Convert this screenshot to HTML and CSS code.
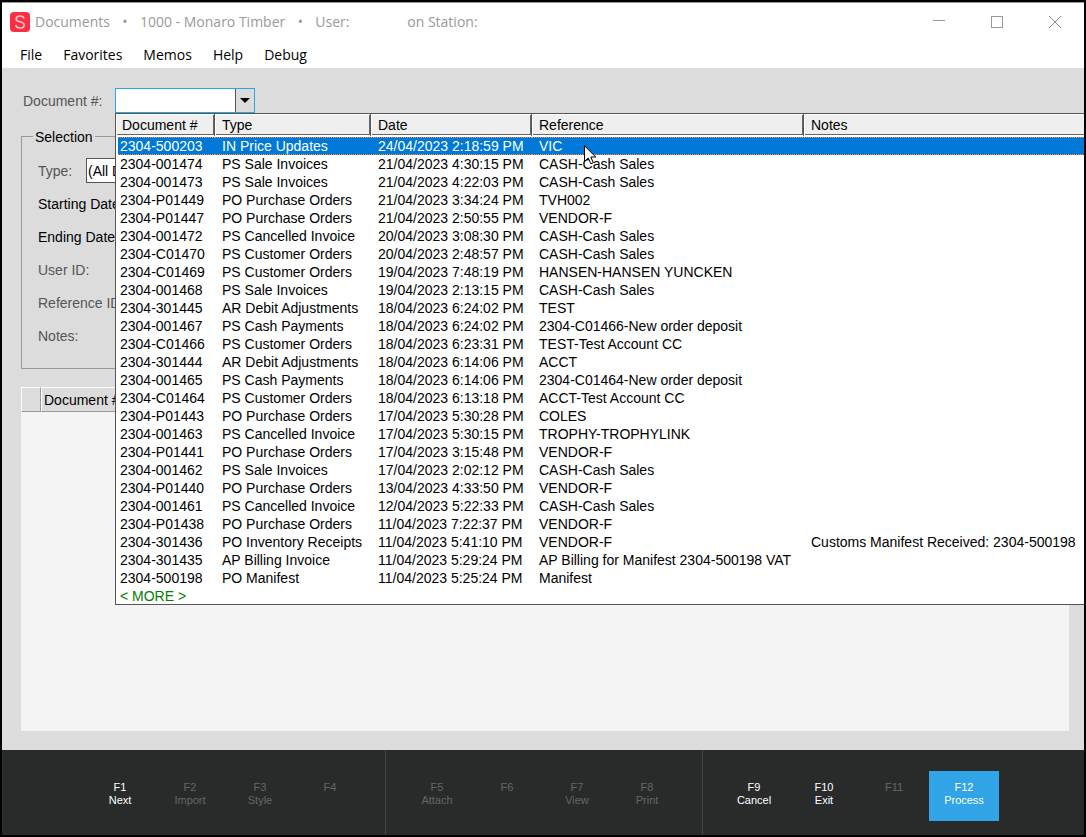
FILE: index.html
```html
<!DOCTYPE html>
<html lang="en">
<head>
    <meta charset="UTF-8">
    <meta name="viewport" content="width=device-width, initial-scale=1.0">
    <title>Documents</title>
    <link rel="stylesheet" href="styles.css">
</head>
<body>
    <div class="window">
        <header class="titlebar">
            <svg class="logo" width="20" height="20" viewBox="0 0 20 20" aria-hidden="true">
                <rect width="20" height="20" rx="4" fill="#fb2f41"/>
                <path d="M14 6.6C13.6 4.9 12.1 4 10 4C7.700 4 6.100 5.100 6.100 6.900C6.100 10.700 14.100 8.800 14.100 12.900C14.100 14.800 12.400 16 10.100 16C7.700 16 6 14.900 5.700 12.900" fill="none" stroke="#ffc9cd" stroke-width="1.6"/>
            </svg>
            <span class="title">Documents</span>
            <span class="dot">•</span>
            <span class="title">1000 - Monaro Timber</span>
            <span class="dot">•</span>
            <span class="title user">User:</span>
            <span class="title">on Station:</span>
            <div class="controls">
                <button type="button" aria-label="Minimize"><svg width="12" height="12" viewBox="0 0 12 12"><path d="M0 4.500H12" stroke="#999"/></svg></button>
                <button type="button" aria-label="Maximize"><svg width="12" height="12" viewBox="0 0 12 12"><rect x=".5" y=".5" width="11" height="11" fill="none" stroke="#999"/></svg></button>
                <button type="button" aria-label="Close"><svg width="12" height="12" viewBox="0 0 12 12"><path d="M0 0L12 12M12 0L0 12" stroke="#888"/></svg></button>
            </div>
        </header>
        <nav class="menu">
            <a href="#">File</a>
            <a href="#">Favorites</a>
            <a href="#">Memos</a>
            <a href="#">Help</a>
            <a href="#">Debug</a>
        </nav>

        <main class="content">
            <div class="document-row">
                <label for="document">Document #:</label>
                <div class="combo">
                    <input type="text" id="document">
                    <button type="button" aria-label="Open list"><svg width="10" height="5" viewBox="0 0 10 5"><path d="M0 0H10L5 5Z"/></svg></button>
                    <div class="popup">
                        <table class="lookup">
                            <colgroup>
                                <col class="col-document">
                                <col class="col-type">
                                <col class="col-date">
                                <col class="col-reference">
                                <col>
                            </colgroup>
                            <thead>
                                <tr><th>Document #</th><th>Type</th><th>Date</th><th>Reference</th><th>Notes</th></tr>
                            </thead>
                            <tbody>
                                <tr class="selected"><td>2304-500203</td><td>IN Price Updates</td><td>24/04/2023 2:18:59 PM</td><td>VIC</td><td></td></tr>
                                <tr><td>2304-001474</td><td>PS Sale Invoices</td><td>21/04/2023 4:30:15 PM</td><td>CASH-Cash Sales</td><td></td></tr>
                                <tr><td>2304-001473</td><td>PS Sale Invoices</td><td>21/04/2023 4:22:03 PM</td><td>CASH-Cash Sales</td><td></td></tr>
                                <tr><td>2304-P01449</td><td>PO Purchase Orders</td><td>21/04/2023 3:34:24 PM</td><td>TVH002</td><td></td></tr>
                                <tr><td>2304-P01447</td><td>PO Purchase Orders</td><td>21/04/2023 2:50:55 PM</td><td>VENDOR-F</td><td></td></tr>
                                <tr><td>2304-001472</td><td>PS Cancelled Invoice</td><td>20/04/2023 3:08:30 PM</td><td>CASH-Cash Sales</td><td></td></tr>
                                <tr><td>2304-C01470</td><td>PS Customer Orders</td><td>20/04/2023 2:48:57 PM</td><td>CASH-Cash Sales</td><td></td></tr>
                                <tr><td>2304-C01469</td><td>PS Customer Orders</td><td>19/04/2023 7:48:19 PM</td><td>HANSEN-HANSEN YUNCKEN</td><td></td></tr>
                                <tr><td>2304-001468</td><td>PS Sale Invoices</td><td>19/04/2023 2:13:15 PM</td><td>CASH-Cash Sales</td><td></td></tr>
                                <tr><td>2304-301445</td><td>AR Debit Adjustments</td><td>18/04/2023 6:24:02 PM</td><td>TEST</td><td></td></tr>
                                <tr><td>2304-001467</td><td>PS Cash Payments</td><td>18/04/2023 6:24:02 PM</td><td>2304-C01466-New order deposit</td><td></td></tr>
                                <tr><td>2304-C01466</td><td>PS Customer Orders</td><td>18/04/2023 6:23:31 PM</td><td>TEST-Test Account CC</td><td></td></tr>
                                <tr><td>2304-301444</td><td>AR Debit Adjustments</td><td>18/04/2023 6:14:06 PM</td><td>ACCT</td><td></td></tr>
                                <tr><td>2304-001465</td><td>PS Cash Payments</td><td>18/04/2023 6:14:06 PM</td><td>2304-C01464-New order deposit</td><td></td></tr>
                                <tr><td>2304-C01464</td><td>PS Customer Orders</td><td>18/04/2023 6:13:18 PM</td><td>ACCT-Test Account CC</td><td></td></tr>
                                <tr><td>2304-P01443</td><td>PO Purchase Orders</td><td>17/04/2023 5:30:28 PM</td><td>COLES</td><td></td></tr>
                                <tr><td>2304-001463</td><td>PS Cancelled Invoice</td><td>17/04/2023 5:30:15 PM</td><td>TROPHY-TROPHYLINK</td><td></td></tr>
                                <tr><td>2304-P01441</td><td>PO Purchase Orders</td><td>17/04/2023 3:15:48 PM</td><td>VENDOR-F</td><td></td></tr>
                                <tr><td>2304-001462</td><td>PS Sale Invoices</td><td>17/04/2023 2:02:12 PM</td><td>CASH-Cash Sales</td><td></td></tr>
                                <tr><td>2304-P01440</td><td>PO Purchase Orders</td><td>13/04/2023 4:33:50 PM</td><td>VENDOR-F</td><td></td></tr>
                                <tr><td>2304-001461</td><td>PS Cancelled Invoice</td><td>12/04/2023 5:22:33 PM</td><td>CASH-Cash Sales</td><td></td></tr>
                                <tr><td>2304-P01438</td><td>PO Purchase Orders</td><td>11/04/2023 7:22:37 PM</td><td>VENDOR-F</td><td></td></tr>
                                <tr><td>2304-301436</td><td>PO Inventory Receipts</td><td>11/04/2023 5:41:10 PM</td><td>VENDOR-F</td><td>Customs Manifest Received: 2304-500198</td></tr>
                                <tr><td>2304-301435</td><td>AP Billing Invoice</td><td>11/04/2023 5:29:24 PM</td><td>AP Billing for Manifest 2304-500198 VAT</td><td></td></tr>
                                <tr><td>2304-500198</td><td>PO Manifest</td><td>11/04/2023 5:25:24 PM</td><td>Manifest</td><td></td></tr>
                            </tbody>
                        </table>
                        <a class="more" href="#">&lt; MORE &gt;</a>
                    </div>
                </div>
            </div>

            <fieldset class="selection">
                <legend>Selection</legend>
                <div class="field">
                    <label for="type">Type:</label>
                    <select id="type"><option>(All Documents)</option></select>
                </div>
                <div class="field active">Starting Date</div>
                <div class="field active">Ending Date</div>
                <div class="field">User ID:</div>
                <div class="field">Reference ID:</div>
                <div class="field">Notes:</div>
            </fieldset>

            <div class="grid">
                <table>
                    <thead>
                        <tr><th class="marker"></th><th>Document #</th></tr>
                    </thead>
                </table>
            </div>
        </main>

        <footer class="keys">
            <div class="key-group">
                <button type="button">F1<br>Next</button>
                <button type="button" disabled>F2<br>Import</button>
                <button type="button" disabled>F3<br>Style</button>
                <button type="button" disabled>F4</button>
            </div>
            <div class="key-group">
                <button type="button" disabled>F5<br>Attach</button>
                <button type="button" disabled>F6</button>
                <button type="button" disabled>F7<br>View</button>
                <button type="button" disabled>F8<br>Print</button>
            </div>
            <div class="key-group">
                <button type="button">F9<br>Cancel</button>
                <button type="button">F10<br>Exit</button>
                <button type="button" disabled>F11</button>
                <button type="button" class="primary">F12<br>Process</button>
            </div>
        </footer>
    </div>

    <svg class="pointer" width="13" height="20" viewBox="0 0 13 20" aria-hidden="true">
        <path d="M.5 .8V16.500L4.200 13L6.800 18.800L9.300 17.700L6.800 12H11.800Z" fill="#fff" stroke="#000"/>
    </svg>
</body>
</html>
```

FILE: styles.css
```css
* {
    box-sizing: border-box;
}
body {
    margin: 0;
    font-family: "Liberation Sans", Arial, sans-serif;
    font-size: 14px;
    color: #000;
}
button,
input,
select {
    margin: 0;
    padding: 0;
    border: 0;
    border-radius: 0;
    background: none;
    font: inherit;
    color: inherit;
}
.window {
    display: flex;
    flex-direction: column;
    min-height: 100vh;
    border: 2px solid #000;
    overflow: hidden;
}

/* Title bar and menu */
.titlebar {
    display: flex;
    align-items: center;
    height: 38px;
    padding-left: 8px;
    border-top: 1px solid #999;
    background: #fff;
    font-family: "Open Sans", "Noto Sans", sans-serif;
    color: #999;
}
.logo {
    margin-right: 5px;
}
.dot {
    width: 30px;
    text-align: center;
}
.user {
    width: 92px;
}
.controls {
    display: flex;
    margin-left: auto;
}
.controls button {
    display: flex;
    align-items: center;
    justify-content: center;
    width: 58px;
    height: 36px;
}
.menu {
    display: flex;
    align-items: center;
    gap: 21px;
    height: 28px;
    padding-left: 18px;
    background: #fff;
    font-family: "Open Sans", "Noto Sans", sans-serif;
}
.menu a {
    color: #000;
    text-decoration: none;
}

/* Form */
.content {
    display: flex;
    flex-direction: column;
    flex: 1;
    padding: 20px 15px 19px 19px;
    background: #dcdcdc;
}
.document-row {
    display: flex;
    align-items: center;
    color: #555;
}
.document-row label {
    width: 94px;
    padding-left: 2px;
}
.combo {
    display: flex;
    width: 140px;
    height: 25px;
    border: 1px solid #2ea3e6;
}
.combo input {
    flex: 1;
    min-width: 0;
    background: #fff;
    outline: 0;
}
.combo button {
    display: flex;
    align-items: center;
    justify-content: center;
    width: 19px;
    border-left: 1px solid #555;
}
.selection {
    min-width: 0;
    margin: 14px 0 0;
    padding: 9px 16px 16px;
    border: 1px solid #999;
    color: #555;
}
.selection legend {
    margin-left: -5px;
    padding: 2px 2px 0;
    line-height: 16px;
    color: #000;
}
.field {
    display: flex;
    align-items: center;
    height: 33px;
}
.field label {
    width: 48px;
}
.field select {
    width: 240px;
    height: 25px;
    padding-left: 1px;
    border: 1px solid #555;
    background: #fff;
    color: #000;
    appearance: none;
}
.active {
    color: #000;
}
.grid {
    flex: 1;
    margin-top: 18px;
    background: #f4f4f4;
}
.grid table {
    width: 100%;
    border-spacing: 0;
}
.grid th {
    height: 25px;
    padding: 0 2px;
    border: solid;
    border-width: 1px 0 1px 1px;
    border-color: #fff #fff #999;
    background: #dcdcdc;
    font-weight: normal;
    text-align: left;
}
.grid .marker {
    width: 20px;
    border-right: 1px solid #999;
}

/* Lookup list below the combo */
.popup {
    position: absolute;
    top: 113px;
    left: 115px;
    right: 2px;
    border: 1px solid #555;
    border-right: 0;
    background: #fff;
    color: #000;
}
.lookup {
    width: 100%;
    table-layout: fixed;
    border-spacing: 0;
    white-space: nowrap;
}
.col-document {
    width: 99px;
}
.col-type {
    width: 156px;
}
.col-date {
    width: 161px;
}
.col-reference {
    width: 272px;
}
.lookup th {
    height: 23px;
    padding: 0 7px;
    border-right: 1px solid #555;
    border-bottom: 2px solid #fff;
    background: #efefef;
    box-shadow: inset 1px 1px #fff, inset -1px -1px #666;
    font-weight: normal;
    text-align: left;
}
.lookup th:first-child {
    padding: 0 6px;
}
.lookup th:last-child {
    border-right: 0;
    box-shadow: inset 1px 1px #fff, inset 0 -1px #666;
}
.lookup td {
    height: 18px;
    padding: 0 7px;
    line-height: 18px;
}
.lookup td:first-child {
    padding: 0 2px;
    border-left: 2px solid #fff;
}
/* focus dots along the top and bottom edge */
.lookup .selected td {
    background-color: #0078d7;
    background-image: linear-gradient(90deg, #ff8728 50%, #0078d7 50%), linear-gradient(90deg, #ff8728 50%, #0078d7 50%);
    background-position: left top, left bottom;
    background-repeat: repeat-x;
    background-size: 2px 1px;
    color: #fff;
}
.more {
    display: block;
    height: 17px;
    padding-left: 4px;
    line-height: 19px;
    color: #008000;
    text-decoration: none;
}

/* Function keys */
.keys {
    display: flex;
    justify-content: center;
    height: 85px;
    padding-top: 6px;
    padding-right: 2px;
    background: #292b2b;
}
.key-group {
    display: flex;
    align-items: center;
    margin-top: -6px;
    padding: 6px 20px 0 16px;
    border-right: 1px solid #444;
}
.key-group:first-child {
    padding-left: 0;
}
.key-group:last-child {
    padding-right: 0;
    border-right: 0;
}
.key-group button {
    display: flex;
    flex-direction: column;
    justify-content: flex-start;
    width: 70px;
    height: 50px;
    padding-top: 10px;
    font-size: 11px;
    line-height: 13px;
    text-align: center;
    color: #fff;
}
.key-group button:disabled {
    color: #666;
}
.key-group .primary {
    background: #30a4e7;
}

.pointer {
    position: absolute;
    top: 145px;
    left: 584px;
}
```
